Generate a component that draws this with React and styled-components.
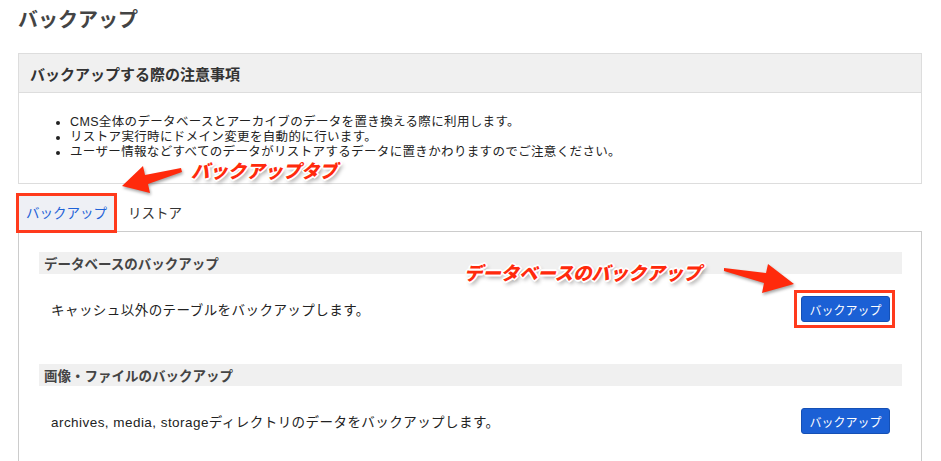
import React from "react";
import styled, { createGlobalStyle, css } from "styled-components";

const GlobalStyle = createGlobalStyle`
  html, body {
    margin: 0;
    padding: 0;
    background: #fff;
  }
  body {
    font-family: "Liberation Sans", "Noto Sans CJK JP", sans-serif;
    color: #222;
  }
`;

const notes = [
  "CMS全体のデータベースとアーカイブのデータを置き換える際に利用します。",
  "リストア実行時にドメイン変更を自動的に行います。",
  "ユーザー情報などすべてのデータがリストアするデータに置きかわりますのでご注意ください。",
];

const sections = [
  {
    id: "db",
    title: "データベースのバックアップ",
    text: "キャッシュ以外のテーブルをバックアップします。",
    marked: true,
  },
  {
    id: "files",
    title: "画像・ファイルのバックアップ",
    text: "archives, media, storageディレクトリのデータをバックアップします。",
    marked: false,
  },
];

export default function App() {
  return (
    <Page>
      <GlobalStyle />
      <Title>バックアップ</Title>

      <NoteBox>
        <NoteHeader>バックアップする際の注意事項</NoteHeader>
        <NoteBody>
          <ul>
            {notes.map((n) => (
              <li key={n}>{n}</li>
            ))}
          </ul>
        </NoteBody>
      </NoteBox>

      <TabList>
        <Tab $active>バックアップ</Tab>
        <Tab>リストア</Tab>
      </TabList>

      <Panel>
        {sections.map(({ id, title, text, marked }) => (
          <Section key={id}>
            <SectionTitle>{title}</SectionTitle>
            <SectionRow>
              <p>{text}</p>
              <Button $marked={marked}>バックアップ</Button>
            </SectionRow>
          </Section>
        ))}
      </Panel>

      <Callout $x={191} $y={157}>バックアップタブ</Callout>
      <Arrow $x={118} $y={160} width="66" height="36" viewBox="0 0 66 36">
        <polygon points="4,26 25,6 27,15 63,8 64,12 30,24 32,33" />
      </Arrow>

      <Callout $x={464} $y={259}>データベースのバックアップ</Callout>
      <Arrow $x={722} $y={262} width="76" height="34" viewBox="0 0 76 34">
        <polygon points="2,6 44,11 46,2 72,22 40,31 42,21 2,9" />
      </Arrow>
    </Page>
  );
}

const Page = styled.div`
  position: relative;
  padding: 8px 19px 0 18px;
  min-height: 461px;
  box-sizing: border-box;
  overflow: hidden;
`;

const Title = styled.h1`
  margin: 0;
  font-size: 20px;
  line-height: 24px;
  font-weight: 700;
  color: #444;
`;

const NoteBox = styled.div`
  margin-top: 21px;
  border: 1px solid #ddd;
`;

const NoteHeader = styled.div`
  height: 38px;
  display: flex;
  align-items: center;
  padding-left: 11px;
  background: #f0f0f0;
  border-bottom: 1px solid #ddd;
  font-size: 15px;
  font-weight: 700;
  color: #333;
`;

const NoteBody = styled.div`
  padding: 22px 0 23px;
  ul {
    margin: 0;
    padding-left: 51px;
    font-size: 12.5px;
    line-height: 15px;
    letter-spacing: 0.35px;
    color: #222;
  }
`;

const TabList = styled.div`
  margin-top: 11px;
  display: flex;
  gap: 5px;
  border-bottom: 1px solid #ccc;
`;

const Tab = styled.div`
  height: 36px;
  display: flex;
  align-items: center;
  padding: 0 8px 3px;
  box-sizing: border-box;
  font-size: 13.5px;
  color: ${(p) => (p.$active ? "#1f63d8" : "#333")};
  background: ${(p) => (p.$active ? "#eef0f5" : "transparent")};
  outline: ${(p) => (p.$active ? "3px solid #ff3a1c" : "none")};
  outline-offset: -1px;
`;

const Panel = styled.div`
  border: 1px solid #ccc;
  border-top: none;
  padding: 20px 19px 30px 20px;
`;

const Section = styled.section`
  & + & {
    margin-top: 20px;
  }
`;

const SectionTitle = styled.h2`
  margin: 0;
  height: 22px;
  display: flex;
  align-items: center;
  padding-left: 5px;
  background: #f0f0f0;
  font-size: 13.5px;
  font-weight: 700;
  color: #444;
`;

const SectionRow = styled.div`
  display: flex;
  align-items: center;
  justify-content: space-between;
  padding: 22px 12px;
  p {
    margin: 0;
    font-size: 13.5px;
    letter-spacing: 0.45px;
    color: #222;
  }
`;

const Button = styled.button`
  position: relative;
  height: 26px;
  width: 89px;
  padding: 0;
  border: 1px solid #1550b5;
  border-radius: 3px;
  background: #1b60d5;
  color: #fff;
  font-family: inherit;
  font-size: 12px;
  ${(p) =>
    p.$marked &&
    css`
      &::after {
        content: "";
        position: absolute;
        inset: -7px -6px -7px -8px;
        border: 3px solid #ff3a1c;
        pointer-events: none;
      }
    `}
`;

const Callout = styled.div`
  position: absolute;
  left: ${(p) => p.$x}px;
  top: ${(p) => p.$y}px;
  font-size: 18.5px;
  font-weight: 900;
  font-style: italic;
  letter-spacing: -0.2px;
  color: #ff2a0c;
  white-space: nowrap;
  text-shadow: 1px 1px 0 #fff, -1px -1px 0 #fff, 1px -1px 0 #fff, -1px 1px 0 #fff,
    2px 0 0 #fff, -2px 0 0 #fff, 0 2px 0 #fff, 0 -2px 0 #fff,
    2px 3px 4px rgba(0, 0, 0, 0.45);
  pointer-events: none;
`;

const Arrow = styled.svg`
  position: absolute;
  left: ${(p) => p.$x}px;
  top: ${(p) => p.$y}px;
  overflow: visible;
  pointer-events: none;
  polygon {
    fill: #ff2a0c;
    filter: drop-shadow(1px 2px 1.5px rgba(0, 0, 0, 0.35));
  }
`;
